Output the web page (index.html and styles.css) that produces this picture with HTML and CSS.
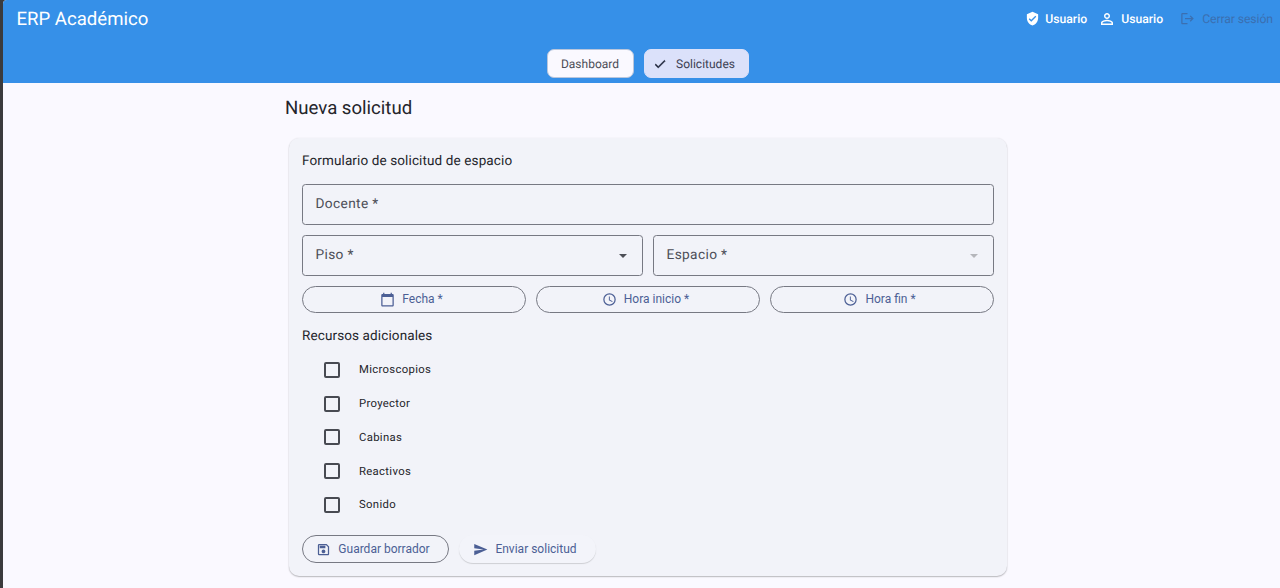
FILE: index.html
```
<!DOCTYPE html>
<html lang="es">
<head>
<meta charset="utf-8">
<title>ERP Académico</title>
<link rel="stylesheet" href="styles.css">
</head>
<body>
<div class="app">
  <header class="header">
    <div class="topbar">
      <span class="brand">ERP Académico</span>
      <div class="session">
        <span class="user role"><svg class="icon" viewBox="0 0 24 24"><path d="M12 1 3 5v6c0 5.55 3.84 10.74 9 12 5.16-1.26 9-6.45 9-12V5l-9-4zm-2 16-4-4 1.41-1.41L10 14.17l6.59-6.59L18 9l-8 8z"/></svg><span>Usuario</span></span>
        <span class="user"><svg class="icon person" viewBox="0 0 24 24"><path d="M12 5.9a2.1 2.1 0 1 1 0 4.2 2.1 2.1 0 0 1 0-4.2m0 9c2.97 0 6.1 1.46 6.1 2.1v1.1H5.9V17c0-.64 3.13-2.1 6.1-2.1M12 4C9.79 4 8 5.79 8 8s1.79 4 4 4 4-1.79 4-4-1.79-4-4-4zm0 9c-2.67 0-8 1.34-8 4v3h16v-3c0-2.66-5.33-4-8-4z"/></svg><span>Usuario</span></span>
        <span class="logout"><svg class="icon" viewBox="0 0 24 24"><path d="m17 7-1.41 1.41L18.17 11H8v2h10.17l-2.58 2.58L17 17l5-5zM4 5h8V3H4c-1.1 0-2 .9-2 2v14c0 1.1.9 2 2 2h8v-2H4V5z"/></svg><span>Cerrar sesión</span></span>
      </div>
    </div>
    <nav class="tabs">
      <a class="tab"><span>Dashboard</span></a>
      <a class="tab selected"><svg class="icon" viewBox="0 0 24 24"><path d="M9 16.2 4.8 12l-1.4 1.4L9 19 21 7l-1.4-1.4z"/></svg><span>Solicitudes</span></a>
    </nav>
  </header>
  <main class="main">
    <h1 class="title"><span>Nueva solicitud</span></h1>
    <form class="card">
      <h2 class="heading"><span>Formulario de solicitud de espacio</span></h2>
      <div class="field docente"><span>Docente *</span></div>
      <div class="row selects">
        <div class="field"><span>Piso *</span><i class="caret"></i></div>
        <div class="field"><span>Espacio *</span><i class="caret disabled"></i></div>
      </div>
      <div class="row">
        <button type="button" class="pill"><svg class="icon" viewBox="0 0 24 24"><path d="M20 3h-1V1h-2v2H7V1H5v2H4c-1.1 0-2 .9-2 2v16c0 1.1.9 2 2 2h16c1.1 0 2-.9 2-2V5c0-1.1-.9-2-2-2zm0 18H4V8h16v13z"/></svg><span>Fecha *</span></button>
        <button type="button" class="pill"><svg class="icon" viewBox="0 0 24 24"><path d="M12 2a10 10 0 1 0 0 20 10 10 0 0 0 0-20zm0 18a8 8 0 1 1 0-16 8 8 0 0 1 0 16zm.5-13H11v6l5.25 3.15.75-1.23-4.5-2.67z"/></svg><span>Hora inicio *</span></button>
        <button type="button" class="pill"><svg class="icon" viewBox="0 0 24 24"><path d="M12 2a10 10 0 1 0 0 20 10 10 0 0 0 0-20zm0 18a8 8 0 1 1 0-16 8 8 0 0 1 0 16zm.5-13H11v6l5.25 3.15.75-1.23-4.5-2.67z"/></svg><span>Hora fin *</span></button>
      </div>
      <h2 class="heading resources"><span>Recursos adicionales</span></h2>
      <div class="checks">
        <label class="check"><i class="box"></i><span>Microscopios</span></label>
        <label class="check"><i class="box"></i><span>Proyector</span></label>
        <label class="check"><i class="box"></i><span>Cabinas</span></label>
        <label class="check"><i class="box"></i><span>Reactivos</span></label>
        <label class="check"><i class="box"></i><span>Sonido</span></label>
      </div>
      <div class="actions">
        <button type="button" class="pill save"><svg class="icon" viewBox="0 0 24 24"><path d="M17 3H5a2 2 0 0 0-2 2v14a2 2 0 0 0 2 2h14c1.1 0 2-.9 2-2V7l-4-4zm2 16H5V5h11.17L19 7.83V19zm-7-7c-1.66 0-3 1.34-3 3s1.34 3 3 3 3-1.34 3-3-1.34-3-3-3zM6 6h9v4H6z"/></svg><span>Guardar borrador</span></button>
        <button type="button" class="pill send"><svg class="icon" viewBox="0 0 24 24"><path d="M2.01 21 23 12 2.01 3 2 10l15 2-15 2z"/></svg><span>Enviar solicitud</span></button>
      </div>
    </form>
  </main>
</div>
</body>
</html>
```
FILE: styles.css
```
* { box-sizing: border-box; }
body {
  margin: 0;
  height: 588px;
  overflow: hidden;
  padding-left: 3px;
  background: #3b3b3d;
  font-family: Roboto, "Liberation Sans", sans-serif;
  color: #24252b;
  text-rendering: geometricPrecision;
}
.app { height: 588px; background: #faf9ff; border-top-left-radius: 4px; overflow: hidden; }
.icon { fill: currentColor; display: block; flex: none; width: 15px; height: 15px; }
span { white-space: nowrap; }

.header { height: 83px; background: #3690e8; color: #fff; }
.topbar { display: flex; justify-content: space-between; align-items: center; height: 37px; padding: 0 7px 0 13.5px; }
.brand { font-size: 18.6px; }
.session { display: flex; align-items: center; font-size: 12.2px; font-weight: 500; }
.user { display: flex; align-items: center; gap: 5px; }
.role { margin-right: 11px; }
.person { width: 18px; height: 18px; }
.logout { display: flex; align-items: center; gap: 7px; margin-left: 17px; color: #3b6fb0; font-weight: 400; letter-spacing: -0.08px; }
.tabs { display: flex; justify-content: center; gap: 10px; padding: 12px 0 0 12px; }
.tab {
  display: flex; align-items: center; justify-content: center;
  width: 87px; height: 29px;
  border: 1px solid #b9c6dc; border-radius: 7px;
  background: #faf9ff; color: #4c4e57;
  font-size: 12px; letter-spacing: 0;
}
.selected { width: 105px; gap: 9px; padding-right: 4px; border-color: #dbe1fa; background: #dbe1fa; color: #3b4052; }
.selected .icon { width: 14px; height: 14px; color: #1b2136; stroke: currentColor; stroke-width: .8; }

.main { width: 722px; margin-left: 282px; }
.title { display: flex; align-items: center; height: 49px; margin: 0 0 6px; font-size: 18.6px; font-weight: 400; }
.card {
  width: 718.5px; height: 438px; margin-left: 3.5px; padding: 10px 13px 13px 13.5px;
  border-radius: 10px; background: #f2f3f9;
  box-shadow: 0 1px 1.5px rgba(0, 0, 0, .26), 0 0 2px rgba(0, 0, 0, .06);
}
.heading { display: flex; align-items: center; height: 24px; margin: 0; padding-top: 1px; font-size: 13.5px; font-weight: 400; letter-spacing: 0.12px; }
.field {
  display: flex; align-items: center; justify-content: space-between; flex: 1;
  height: 41px; padding: 0 15px 1px 12.5px;
  border: 1px solid #777983; border-radius: 3.5px;
  color: #4c4e57; font-size: 13.7px; letter-spacing: 0.36px;
}
.docente { margin-top: 12px; }
.row { display: flex; gap: 10px; }
.selects { margin: 10px 0; }
.caret { border: 4.5px solid transparent; border-top: 4.5px solid #4d4f56; border-bottom: 0; margin-top: 2px; }
.disabled { border-top-color: #b5b6bb; }
.pill {
  display: flex; align-items: center; justify-content: center; gap: 7px; flex: 1;
  height: 27px; padding: 0 5px 1px 0; border: 1px solid #777983; border-radius: 14px;
  background: transparent; color: #4c5f95;
  font-family: inherit; font-size: 12px; letter-spacing: 0;
}
.resources { margin-top: 10px; padding-top: 2px; }
.checks { margin: 6px 0 0 22px; }
.check { display: flex; align-items: center; gap: 19px; height: 33.75px; font-size: 11.3px; letter-spacing: 0.33px; }
.box { width: 16px; height: 16px; border: 2px solid #484a52; border-radius: 2px; }
.actions { display: flex; gap: 10px; margin-top: 13.5px; }
.actions .pill { flex: none; height: 27.5px; padding: 0 5px 0 0; }
.actions .save { width: 147px; }
.actions .send { width: 137px; border: 0; background: #f3f4fa; box-shadow: 0 1px 1px rgba(0, 0, 0, .15); }
```
